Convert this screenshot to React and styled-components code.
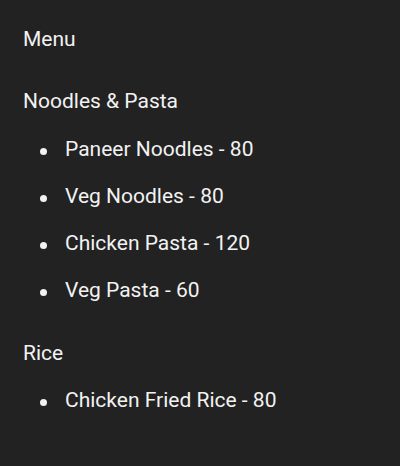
import React from "react";
import styled, { createGlobalStyle } from "styled-components";

const GlobalStyle = createGlobalStyle`
  html, body {
    margin: 0;
    padding: 0;
    background: #222222;
  }
  body {
    font-family: Roboto, "Liberation Sans", sans-serif;
    color: #f2f2f2;
  }
`;

const Page = styled.div`
  width: 400px;
  height: 466px;
  box-sizing: border-box;
  padding: 27px 0 0 23px;
  background: #222222;
`;

const Title = styled.div`
  font-size: 21px;
  line-height: 24px;
  margin-bottom: 38px;
`;

const Section = styled.section`
  margin-bottom: ${(p) => p.$gap || 0}px;
`;

const Heading = styled.div`
  font-size: 21px;
  line-height: 24px;
  margin-bottom: ${(p) => p.$gap}px;
`;

const List = styled.ul`
  list-style: none;
  margin: 0;
  padding: 0 0 0 42px;
`;

const Item = styled.li`
  position: relative;
  font-size: 21px;
  line-height: 47px;
  height: 47px;

  &::before {
    content: "";
    position: absolute;
    left: -25px;
    top: 22px;
    width: 7px;
    height: 7px;
    border-radius: 50%;
    background: #f2f2f2;
  }
`;

const menu = [
  {
    name: "Noodles & Pasta",
    items: [
      "Paneer Noodles - 80",
      "Veg Noodles - 80",
      "Chicken Pasta - 120",
      "Veg Pasta - 60",
    ],
  },
  {
    name: "Rice",
    items: ["Chicken Fried Rice - 80"],
  },
];

export default function App() {
  return (
    <>
      <GlobalStyle />
      <Page>
        <Title>Menu</Title>
        {menu.map((section, i) => (
          <Section key={section.name} $gap={i === 0 ? 27 : 0}>
            <Heading $gap={i === 0 ? 13 : 12}>{section.name}</Heading>
            <List>
              {section.items.map((item) => (
                <Item key={item}>{item}</Item>
              ))}
            </List>
          </Section>
        ))}
      </Page>
    </>
  );
}
